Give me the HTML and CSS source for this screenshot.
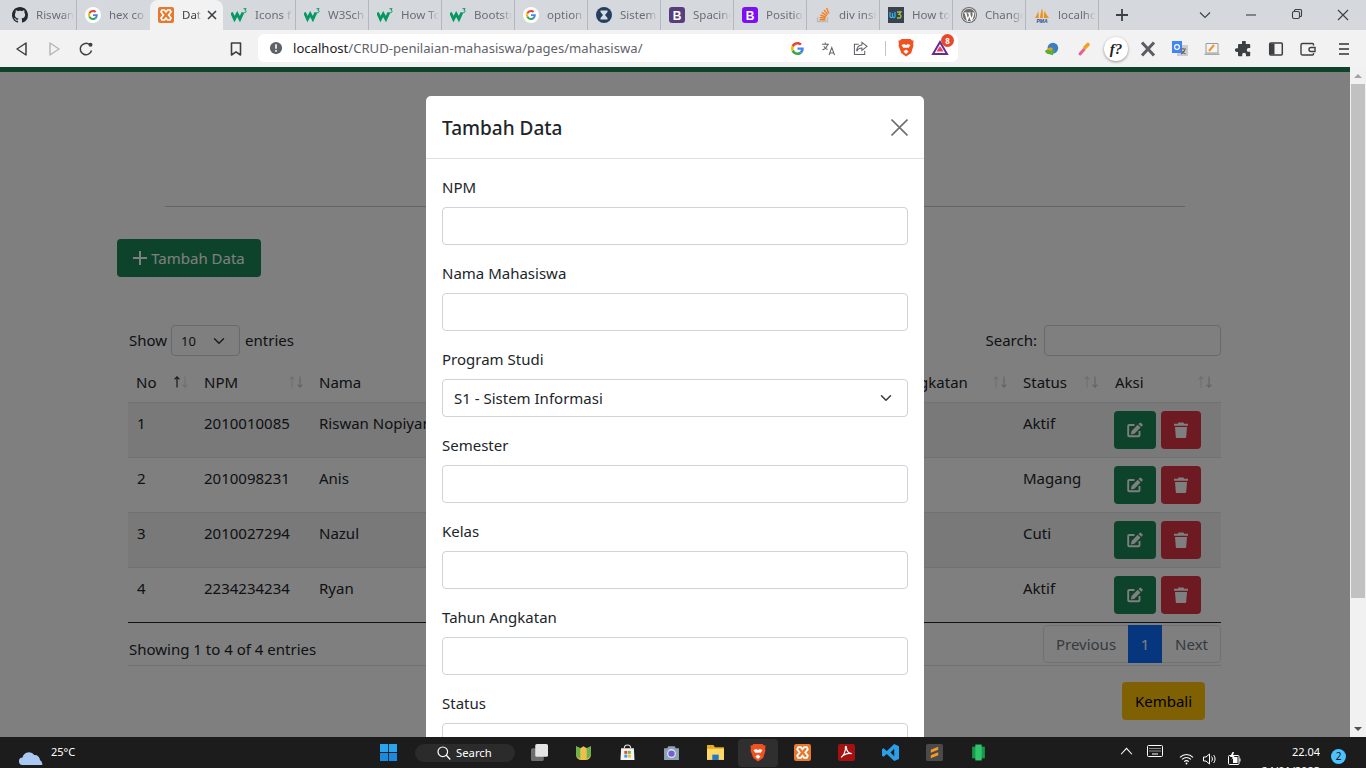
FILE: index.html
```html
<!DOCTYPE html>
<html lang="id">
<head>
  <meta charset="utf-8">
  <title>Data Mahasiswa</title>
  <link rel="stylesheet" href="styles.css">
</head>
<body>

<svg class="defs" width="0" height="0">
  <symbol id="i-google" viewBox="0 0 48 48">
    <path fill="#EA4335" d="M24 9.5c3.54 0 6.71 1.22 9.21 3.6l6.85-6.85C35.9 2.38 30.47 0 24 0 14.62 0 6.51 5.38 2.56 13.22l7.98 6.19C12.43 13.72 17.74 9.5 24 9.5z"/>
    <path fill="#4285F4" d="M46.98 24.55c0-1.57-.15-3.09-.38-4.55H24v9.02h12.94c-.58 2.96-2.26 5.48-4.78 7.18l7.73 6c4.51-4.18 7.09-10.36 7.09-17.65z"/>
    <path fill="#FBBC05" d="M10.53 28.59c-.48-1.45-.76-2.99-.76-4.59s.27-3.14.76-4.59l-7.98-6.19C.92 16.46 0 20.12 0 24c0 3.88.92 7.54 2.56 10.78l7.97-6.19z"/>
    <path fill="#34A853" d="M24 48c6.48 0 11.93-2.13 15.89-5.81l-7.73-6c-2.15 1.45-4.92 2.3-8.16 2.3-6.26 0-11.57-4.22-13.47-9.91l-7.98 6.19C6.51 42.62 14.62 48 24 48z"/>
  </symbol>
  <symbol id="i-gbadge" viewBox="0 0 16 16">
    <circle cx="8" cy="8" r="8" fill="#fff"/>
    <use href="#i-google" x="3" y="3" width="10" height="10"/>
  </symbol>
  <symbol id="i-w3" viewBox="0 0 16 16">
    <path fill="none" stroke="#059862" stroke-width="2.8" d="M0.500 5.500l3 6.500 2.700-5 2.700 5 3-6.500"/>
    <path fill="none" stroke="#059862" stroke-width="1" d="M12.500 1.700h2.600l-1.200 1.500c1.600 0 1.600 2.400-.2 2.400h-1.200"/>
  </symbol>
  <symbol id="i-xampp" viewBox="0 0 16 16">
    <rect width="16" height="16" rx="2" fill="#e8792c"/>
    <path fill="none" stroke="#fff" stroke-width="1.7" d="M4 3h2.400l1.600 2 1.600-2H12l1 2-2.400 3L13 11l-1 2H9.600L8 11l-1.600 2H4l-1-2 2.400-3L3 5z"/>
  </symbol>
  <symbol id="i-edit" viewBox="0 0 16 16">
    <path fill="none" stroke="currentColor" stroke-width="1.900" stroke-linejoin="round" d="M7.500 3H2.200A1 1 0 0 0 1.200 4v9.300a1 1 0 0 0 1 1h9.300a1 1 0 0 0 1-1V9"/>
    <path fill="currentColor" d="M12.600.9a1 1 0 0 1 1.400 0l1.400 1.400a1 1 0 0 1 0 1.400l-1.100 1.100-2.800-2.800zM10.700 2.800l2.800 2.800-6.100 6.100-3.500.7.700-3.500z"/>
  </symbol>
  <symbol id="i-trash" viewBox="0 0 14 16">
    <path fill="currentColor" d="M4.500.6h5l.6 1.200H14v1.900H0V1.800h3.900zM1 5h12l-.8 10a1 1 0 0 1-1 .9H2.800a1 1 0 0 1-1-.9z"/>
  </symbol>
  <symbol id="i-sort" viewBox="0 0 16 12">
    <path fill="none" stroke="#dcdcdc" stroke-width="1.100" d="M4 11.500V1M1.600 3.300L4 .8l2.400 2.500"/>
    <path fill="none" stroke="#c4c4c4" stroke-width="1.100" d="M12 .5V11M9.600 8.700l2.400 2.500 2.400-2.500"/>
  </symbol>
  <symbol id="i-sort-asc" viewBox="0 0 16 12">
    <path fill="none" stroke="#333" stroke-width="1.200" d="M4 11.500V1M1.600 3.300L4 .8l2.400 2.500"/>
    <path fill="none" stroke="#dcdcdc" stroke-width="1.100" d="M12 .5V11M9.600 8.700l2.400 2.500 2.400-2.500"/>
  </symbol>
  <symbol id="i-chev" viewBox="0 0 16 16">
    <path fill="none" stroke="#343a40" stroke-width="2" stroke-linecap="round" stroke-linejoin="round" d="M2 5l6 6 6-6"/>
  </symbol>
</svg>

<div class="tabstrip">
  <div class="tab">
    <svg class="fav" viewBox="0 0 16 16"><path fill="#24292f" d="M8 0C3.580 0 0 3.580 0 8c0 3.540 2.290 6.530 5.470 7.590.4.070.55-.17.55-.38 0-.19-.01-.82-.01-1.490-2.010.37-2.530-.49-2.690-.94-.09-.23-.48-.94-.82-1.130-.28-.15-.68-.52-.01-.53.63-.01 1.080.58 1.230.82.72 1.210 1.870.87 2.330.66.07-.52.28-.87.51-1.070-1.780-.2-3.640-.89-3.640-3.950 0-.87.31-1.590.82-2.150-.08-.2-.36-1.020.08-2.120 0 0 .67-.21 2.200.82.64-.18 1.320-.27 2-.27.68 0 1.360.09 2 .27 1.530-1.040 2.200-.82 2.200-.82.44 1.100.16 1.920.08 2.120.51.56.82 1.270.82 2.150 0 3.070-1.870 3.750-3.650 3.950.29.25.54.73.54 1.480 0 1.070-.01 1.930-.01 2.200 0 .21.15.46.55.38A8.013 8.013 0 0016 8c0-4.420-3.580-8-8-8z"/></svg>
    <span class="tab-label">Riswan</span>
  </div>
  <div class="tab">
    <svg class="fav"><use href="#i-gbadge"/></svg>
    <span class="tab-label">hex co</span>
  </div>
  <div class="tab tab-active">
    <svg class="fav"><use href="#i-xampp"/></svg>
    <span class="tab-label">Dat</span>
    <svg class="tab-close" viewBox="0 0 10 10"><path stroke="#3c4043" stroke-width="1.600" d="M1 1l8 8M9 1l-8 8"/></svg>
  </div>
  <div class="tab">
    <svg class="fav"><use href="#i-w3"/></svg>
    <span class="tab-label">Icons f</span>
  </div>
  <div class="tab">
    <svg class="fav"><use href="#i-w3"/></svg>
    <span class="tab-label">W3Sch</span>
  </div>
  <div class="tab">
    <svg class="fav"><use href="#i-w3"/></svg>
    <span class="tab-label">How To</span>
  </div>
  <div class="tab">
    <svg class="fav"><use href="#i-w3"/></svg>
    <span class="tab-label">Bootstr</span>
  </div>
  <div class="tab">
    <svg class="fav"><use href="#i-gbadge"/></svg>
    <span class="tab-label">option</span>
  </div>
  <div class="tab">
    <svg class="fav" viewBox="0 0 16 16"><circle cx="8" cy="8" r="8" fill="#24405f"/><path fill="#d8dde2" d="M4.500 3.500h7v1.500L9 8l2.500 3v1.500h-7V11L7 8 4.500 5z"/></svg>
    <span class="tab-label">Sistem</span>
  </div>
  <div class="tab">
    <svg class="fav" viewBox="0 0 16 16"><rect width="16" height="16" rx="3" fill="#563d7c"/><text x="8" y="12.500" class="fav-letter">B</text></svg>
    <span class="tab-label">Spacing</span>
  </div>
  <div class="tab">
    <svg class="fav" viewBox="0 0 16 16"><rect width="16" height="16" rx="3" fill="#7c10f2"/><text x="8" y="12.500" class="fav-letter">B</text></svg>
    <span class="tab-label">Position</span>
  </div>
  <div class="tab">
    <svg class="fav" viewBox="0 0 16 16"><path fill="none" stroke="#bcbbbb" stroke-width="1.300" d="M2.500 10v4.500h10V10"/><path fill="none" stroke="#f48024" stroke-width="1.400" d="M4.500 12.800h6M4.700 10.500l5.900.8M5.400 8l5.500 2.200M6.900 5.400l4.900 3.400M9 3l3.700 4.600M11.600 1l2.200 5.400"/></svg>
    <span class="tab-label">div insi</span>
  </div>
  <div class="tab">
    <svg class="fav" viewBox="0 0 16 16"><rect width="16" height="16" fill="#3a4150"/><path fill="none" stroke="#2bb5e8" stroke-width="1.300" d="M2 5v4.500c0 1.500 2.500 1.500 2.500 0V6v3.500c0 1.500 2.500 1.500 2.500 0V5"/><path fill="none" stroke="#a2c93a" stroke-width="1.300" d="M9 5h4l-2 2.300c2.600 0 2.600 3.700 0 3.700H9"/></svg>
    <span class="tab-label">How to</span>
  </div>
  <div class="tab">
    <svg class="fav" viewBox="0 0 16 16"><circle cx="8" cy="8" r="8" fill="#6d6d6d"/><circle cx="8" cy="8" r="6.600" fill="none" stroke="#fff" stroke-width=".7"/><path fill="#fff" d="M2.800 5.500h3.400v.6l-.8.1 1.500 4.800 1-2.800-.7-2H6.500v-.7h3.400v.7h-.8l1.500 4.700 1-3c.3-1-.2-1.600-.7-1.800v-.6h2.300C13.500 7 12.600 10.500 10.700 14.300H10L8.300 9.900 6.600 14.300H6L3.600 6.200h-.8z"/></svg>
    <span class="tab-label">Change</span>
  </div>
  <div class="tab">
    <svg class="fav" viewBox="0 0 16 16"><path fill="#f29111" d="M1 11c1.500-2 2.500-5 3.200-7 .4 2.500.6 5 .4 7zM6 11c.3-3 .8-6 2-9.500 1 3 1 6 .8 9.500zM10 11c0-2.500 0-5 .5-7 1.200 2.500 3 5 4.500 7z"/><text x="8" y="15.800" class="fav-pma">PMA</text></svg>
    <span class="tab-label">localhc</span>
  </div>
  <svg class="tab-new" viewBox="0 0 12 12"><path stroke="#3c4043" stroke-width="1.800" d="M6 0v12M0 6h12"/></svg>
  <div class="window-btns">
    <svg class="win-btn" viewBox="0 0 16 16"><path fill="none" stroke="#3c4043" stroke-width="1.100" d="M3 5.500l5 5 5-5"/></svg>
    <svg class="win-btn" viewBox="0 0 16 16"><path stroke="#3c4043" stroke-width="1.100" d="M3 8h10"/></svg>
    <svg class="win-btn" viewBox="0 0 16 16"><path fill="none" stroke="#3c4043" stroke-width="1.100" d="M5.500 4.500V3.500a1 1 0 0 1 1-1h5a1 1 0 0 1 1 1v5a1 1 0 0 1-1 1h-1"/><rect x="3.500" y="4.500" width="7" height="7" rx="1.500" fill="none" stroke="#3c4043" stroke-width="1.100"/></svg>
    <svg class="win-btn" viewBox="0 0 16 16"><path stroke="#3c4043" stroke-width="1.100" d="M3 3l10 10M13 3L3 13"/></svg>
  </div>
</div>

<div class="toolbar">
  <div class="tool-group">
    <svg class="tool" viewBox="0 0 16 16"><path fill="none" stroke="#3c4043" stroke-width="1.500" stroke-linejoin="round" d="M12 2v12L3 8z"/></svg>
    <svg class="tool" viewBox="0 0 16 16"><path fill="none" stroke="#b5b7ba" stroke-width="1.500" stroke-linejoin="round" d="M4 2v12l9-6z"/></svg>
    <svg class="tool" viewBox="0 0 16 16"><path fill="none" stroke="#3c4043" stroke-width="1.500" d="M13.500 9.500A5.700 5.700 0 1 1 11.800 3.800"/><circle cx="12.500" cy="3.800" r="2" fill="#3c4043"/></svg>
  </div>
  <svg class="tool tool-bookmark" viewBox="0 0 16 16"><path fill="none" stroke="#3c4043" stroke-width="1.600" stroke-linejoin="round" d="M3.500 2h9v12L8 10.800 3.500 14z"/></svg>
  <div class="omnibox">
    <svg class="omni-info" viewBox="0 0 16 16"><circle cx="8" cy="8" r="7" fill="#5f6368"/><path stroke="#fff" stroke-width="1.800" d="M8 3.600v5.200M8 10.200v2"/></svg>
    <span class="omni-url">localhost<span class="omni-path">/CRUD-penilaian-mahasiswa/pages/mahasiswa/</span></span>
    <div class="omni-icons">
      <svg class="omni-g"><use href="#i-google"/></svg>
      <svg class="omni-tool" viewBox="0 0 16 16"><path fill="none" stroke="#5f6368" stroke-width="1.100" d="M1 3.500h7.500M4.500 1.500v2M7 3.500c-.5 2.500-2.500 4.800-5.500 6M3 5.500c.8 1.800 2.300 3 4 3.500M8.500 15l3-8 3 8M9.500 12.800h4"/></svg>
      <svg class="omni-tool" viewBox="0 0 16 16"><path fill="none" stroke="#5f6368" stroke-width="1.100" d="M6 3.500H1.500v11h11v-4M9.500 1.500l5.500 4.200-5.500 4.300V7.500c-3 0-4.500 1.200-5.500 3.500 0-3.800 2-6.500 5.500-6.800z"/></svg>
      <span class="omni-sep"></span>
      <svg class="omni-brave" viewBox="0 0 16 18"><path fill="#f1501f" d="M3.500 0h9l1.500 1.600 1.600-.2-.5 3.600.4 1.500-2.300 7.500L8 17.500 3.300 14 .5 6.500.9 5 .4 1.400 2 1.600z"/><path fill="#fff" d="M8 10.500l2.600 2L8 15l-2.600-2.500zM3.500 6l2.700-1L8 6l1.800-1 2.700 1-2 3-1.500-.5-1 .5-1-.5-1.500.5z"/></svg>
      <span class="omni-bat">
        <svg viewBox="0 0 18 16"><path fill="none" stroke="#662d91" stroke-width="2" d="M9 2L2 14h14z"/><path fill="#e3405f" d="M5.500 11.500h7L9 6z"/></svg>
        <span class="bat-badge">8</span>
      </span>
    </div>
  </div>
  <div class="ext-group">
    <svg class="ext" viewBox="0 0 18 18"><circle cx="10" cy="8" r="6" fill="#3a7fc4"/><path fill="#5caf35" d="M1 11c3-2 6-2 8 0l3-1-2 6-4-1c-2 0-4-1-5-4z"/><path fill="#e3a01b" d="M3 10c2-3 5-3 7-2l-1 3c-2-1-4-1-6-1z"/></svg>
    <svg class="ext" viewBox="0 0 16 16"><path stroke="#ee5d8f" stroke-width="3" stroke-linecap="round" d="M4 13l4-4.500"/><path stroke="#f2a11d" stroke-width="3.600" stroke-linecap="round" d="M9 6.500l3-3"/></svg>
    <span class="ext-f">f?</span>
    <svg class="ext" viewBox="0 0 16 16"><path stroke="#5a5d61" stroke-width="3" d="M2 1.500l12 13M14 1.500L2 14.500"/></svg>
    <svg class="ext" viewBox="0 0 16 16"><rect x="5" y="4" width="11" height="11" fill="#c9ccd0"/><rect width="10" height="12" fill="#4285f4"/><circle cx="5" cy="6" r="2.400" fill="none" stroke="#fff" stroke-width="1.200"/><path stroke="#6a6d70" stroke-width="1.100" d="M8 8h6M11 7v1.500M13 8.500c-.5 2-2 3.500-4 4.500M9.500 10c.8 1 2.500 2.500 4 3"/></svg>
    <svg class="ext" viewBox="0 0 18 16"><path fill="#f4f4f4" stroke="#9a9a9a" d="M3 2.500h12v9.500H3z"/><path fill="#a9a9a9" d="M1 12.500h16l-1 1.500H2z"/><path stroke="#f0942d" stroke-width="2" d="M6 10l5-6"/></svg>
    <svg class="ext" viewBox="0 0 16 16"><path fill="#3c4043" d="M6 1.200a1.900 1.900 0 0 1 3.800 0V3h3.400a1 1 0 0 1 1 1v3h-1.500a1.900 1.900 0 0 0 0 3.800h1.500v3.400a1 1 0 0 1-1 1H10v-1.500a1.900 1.900 0 0 0-3.800 0v1.500H3a1 1 0 0 1-1-1V11H.8a1.900 1.900 0 0 1 0-3.800H2V4a1 1 0 0 1 1-1h3z"/></svg>
    <svg class="ext" viewBox="0 0 16 16"><rect x="1.700" y="2" width="12.600" height="12" rx="1" fill="none" stroke="#3c4043" stroke-width="1.500"/><rect x="2" y="2.500" width="4.500" height="11" fill="#3c4043"/></svg>
    <svg class="ext" viewBox="0 0 16 16"><path fill="none" stroke="#3c4043" stroke-width="1.400" d="M13.500 4.500v-1a1 1 0 0 0-1-1H2.500a1.500 1.500 0 0 0-1.500 1.500v8.500a1.500 1.500 0 0 0 1.500 1.500h10a1 1 0 0 0 1-1v-1M15 6.500h-4a2 2 0 0 0 0 4h4z"/></svg>
    <svg class="ext ext-menu" viewBox="0 0 16 16"><path stroke="#5f6368" stroke-width="1.800" d="M3 3h10M3 8h10M3 13h10"/></svg>
  </div>
</div>

<div class="viewport">
  <div class="page">
    <div class="topline"></div>
    <div class="container">
      <hr class="title-rule">
      <button class="btn btn-success btn-add"><svg class="plus" viewBox="0 0 14 14"><path stroke="#fff" stroke-width="2" d="M7 0v14M0 7h14"/></svg>Tambah Data</button>

      <div class="dt-wrap">
        <div class="dt-top">
          <div class="dt-length">Show
            <span class="dt-select">10 <svg class="chev"><use href="#i-chev"/></svg></span>
            entries</div>
          <div class="dt-search">Search: <span class="dt-input"></span></div>
        </div>

        <table class="dt">
          <colgroup>
            <col class="c-no"><col class="c-npm"><col class="c-nama"><col class="c-prodi"><col class="c-sem"><col class="c-kelas"><col class="c-tahun"><col class="c-status"><col class="c-aksi">
          </colgroup>
          <thead>
            <tr>
              <th>No <svg class="sort"><use href="#i-sort-asc"/></svg></th>
              <th>NPM <svg class="sort"><use href="#i-sort"/></svg></th>
              <th>Nama <svg class="sort"><use href="#i-sort"/></svg></th>
              <th></th>
              <th></th>
              <th></th>
              <th>Tahun Angkatan <svg class="sort"><use href="#i-sort"/></svg></th>
              <th>Status <svg class="sort"><use href="#i-sort"/></svg></th>
              <th>Aksi <svg class="sort"><use href="#i-sort"/></svg></th>
            </tr>
          </thead>
          <tbody>
            <tr class="odd">
              <td>1</td><td>2010010085</td><td>Riswan Nopiyar</td><td></td><td></td><td></td><td></td><td>Aktif</td>
              <td><span class="act act-edit"><svg><use href="#i-edit"/></svg></span><span class="act act-del"><svg><use href="#i-trash"/></svg></span></td>
            </tr>
            <tr>
              <td>2</td><td>2010098231</td><td>Anis</td><td></td><td></td><td></td><td></td><td>Magang</td>
              <td><span class="act act-edit"><svg><use href="#i-edit"/></svg></span><span class="act act-del"><svg><use href="#i-trash"/></svg></span></td>
            </tr>
            <tr class="odd">
              <td>3</td><td>2010027294</td><td>Nazul</td><td></td><td></td><td></td><td></td><td>Cuti</td>
              <td><span class="act act-edit"><svg><use href="#i-edit"/></svg></span><span class="act act-del"><svg><use href="#i-trash"/></svg></span></td>
            </tr>
            <tr>
              <td>4</td><td>2234234234</td><td>Ryan</td><td></td><td></td><td></td><td></td><td>Aktif</td>
              <td><span class="act act-edit"><svg><use href="#i-edit"/></svg></span><span class="act act-del"><svg><use href="#i-trash"/></svg></span></td>
            </tr>
          </tbody>
        </table>

        <div class="dt-bottom">
          <div class="dt-info">Showing 1 to 4 of 4 entries</div>
          <div class="pager">
            <span class="pg">Previous</span><span class="pg pg-on">1</span><span class="pg">Next</span>
          </div>
        </div>
      </div>

      <div class="back-row"><button class="btn btn-warning">Kembali</button></div>
    </div>
  </div>

  <div class="scrollbar">
    <div class="sb-arrow"><span class="sb-up"></span></div>
    <div class="sb-track"><div class="sb-thumb"></div></div>
    <div class="sb-arrow"><span class="sb-down"></span></div>
  </div>

  <div class="backdrop"></div>

  <div class="modal">
    <div class="modal-head">
      <h5 class="modal-title">Tambah Data</h5>
      <svg class="modal-x" viewBox="0 0 16 16"><path stroke="#6f6f6f" stroke-width="1.500" d="M.5.500l15 15M15.500.5l-15 15"/></svg>
    </div>
    <div class="modal-body">
      <div class="field"><label>NPM</label><div class="control"></div></div>
      <div class="field"><label>Nama Mahasiswa</label><div class="control"></div></div>
      <div class="field"><label>Program Studi</label><div class="control control-select">S1 - Sistem Informasi <svg class="chev"><use href="#i-chev"/></svg></div></div>
      <div class="field"><label>Semester</label><div class="control"></div></div>
      <div class="field"><label>Kelas</label><div class="control"></div></div>
      <div class="field"><label>Tahun Angkatan</label><div class="control"></div></div>
      <div class="field"><label>Status</label><div class="control"></div></div>
    </div>
  </div>
</div>

<div class="taskbar">
  <div class="weather">
    <svg class="weather-icon" viewBox="0 0 26 18"><path fill="#a9c9f2" d="M4 18a4 4 0 0 1-.5-8A7 7 0 0 1 16 7.500a5.500 5.500 0 0 1 6 5.500c1.500.5 2.500 2.500 2.500 5z"/></svg>
    <span>25°C</span>
  </div>
  <div class="task-center">
    <svg class="task-ico task-start" viewBox="0 0 16 16"><path fill="#2aa4ee" d="M0 0h7.600v7.600H0zM8.400 0H16v7.600H8.400z"/><path fill="#1a8ae0" d="M0 8.400h7.600V16H0zM8.400 8.400H16V16H8.400z"/></svg>
    <div class="task-search">
      <svg viewBox="0 0 14 14"><circle cx="5.800" cy="5.800" r="4.800" fill="none" stroke="#fff" stroke-width="1.200"/><path stroke="#fff" stroke-width="1.300" d="M9.300 9.300l4 4.200"/></svg>
      Search
    </div>
    <svg class="task-ico" viewBox="0 0 16 16"><rect y="4" width="12" height="12" rx="1.500" fill="#6e6e6e"/><rect x="4" width="12" height="12" rx="1.500" fill="#e4e4e4"/></svg>
    <svg class="task-ico" viewBox="0 0 16 16"><path fill="#ecc04c" d="M1 2l4 2 3-2 3 2 4-2v8a5 5 0 0 1-5 5H6a5 5 0 0 1-5-5z"/><path fill="#6cb24a" d="M1 2l4 2v10c-3-1-4-3-4-5zM15 2l-4 2v10c3-1 4-3 4-5z"/></svg>
    <svg class="task-ico" viewBox="0 0 16 16"><path fill="#f3f3f3" d="M2 4h12l.6 11H1.400z"/><path fill="none" stroke="#e5e5e5" d="M5 4c0-4 6-4 6 0"/><path fill="#e2512c" d="M5 6.500h2.800v2.800H5z"/><path fill="#7fba42" d="M8.400 6.500h2.800v2.800H8.400z"/><path fill="#30a5e8" d="M5 10h2.800v2.800H5z"/><path fill="#fbbb2c" d="M8.400 10h2.800v2.800H8.400z"/></svg>
    <svg class="task-ico" viewBox="0 0 16 16"><path fill="#8fa4b3" d="M1 4h3l1-2h6l1 2h3v11H1z"/><circle cx="8" cy="9" r="3.600" fill="#7a5dd6" stroke="#dbe7ef" stroke-width="1.200"/></svg>
    <svg class="task-ico" viewBox="0 0 16 16"><path fill="#e9ab17" d="M0 1h6l1.500 2H16v3H0z"/><path fill="#ffd968" d="M0 4.500h16V15H0z"/><path fill="#2278c9" d="M5 10h6v5H5z"/></svg>
    <span class="task-on"><svg viewBox="0 0 16 18"><path fill="#f1501f" d="M3.500 0h9l1.500 1.600 1.600-.2-.5 3.600.4 1.500-2.300 7.500L8 17.500 3.300 14 .5 6.500.9 5 .4 1.400 2 1.600z"/><path fill="#fff" d="M8 10.500l2.600 2L8 15l-2.600-2.500zM3.500 6l2.700-1L8 6l1.800-1 2.700 1-2 3-1.500-.5-1 .5-1-.5-1.500.5z"/></svg></span>
    <svg class="task-ico" viewBox="0 0 16 16"><use href="#i-xampp"/></svg>
    <svg class="task-ico" viewBox="0 0 16 16"><rect width="16" height="16" rx="2" fill="#a51111"/><path fill="none" stroke="#fff" stroke-width="1.100" d="M3 12.500c2-1 4.500-6 4-9.500-.3-1 1-1 .9 0 0 3 2 5.500 5 6-3-.5-7 .5-9.900 3.500z"/></svg>
    <svg class="task-ico" viewBox="0 0 16 16"><path fill="#2a9ee8" d="M11.500 0L16 2v12l-4.500 2L4.500 9.500 1.500 12 0 11V5l1.500-1 3 2.500zm0 4.500L8 8l3.500 3.500z"/></svg>
    <svg class="task-ico" viewBox="0 0 16 16"><rect width="16" height="16" rx="1.500" fill="#4a4a4a"/><path fill="#f59a23" d="M11.500 2.500v3L4.500 8.300V5.300zM4.500 13.500v-3l7-2.800v3z"/></svg>
    <svg class="task-ico" viewBox="0 0 16 16"><path fill="#159a4a" d="M2 2.500h12v11H2z"/><path fill="#31c46a" d="M5 .5h6v15H5z"/></svg>
  </div>
  <div class="tray">
    <svg class="tray-ico tray-chev" viewBox="0 0 12 8"><path fill="none" stroke="#fff" d="M1 7l5-5.500L11 7"/></svg>
    <svg class="tray-ico tray-kb" viewBox="0 0 16 12"><rect x=".5" y=".5" width="15" height="11" rx="1" fill="none" stroke="#fff"/><path stroke="#fff" stroke-dasharray="1 1" d="M2.500 3.500h11M2.500 6h11"/><path stroke="#fff" d="M5 9h6"/></svg>
    <svg class="tray-ico tray-low tray-wifi" viewBox="0 0 16 12"><path fill="none" stroke="#fff" stroke-width="1.100" d="M1 4.200c4-4 10-4 14 0M3.200 6.500c3-2.700 6.600-2.700 9.600 0M5.500 8.800c1.500-1.300 3.500-1.300 5 0"/><circle cx="8" cy="10.800" r="1" fill="#fff"/></svg>
    <svg class="tray-ico tray-low tray-vol" viewBox="0 0 14 14"><path fill="none" stroke="#fff" d="M1 5h2.500L7 2v10L3.500 9H1zM9 4.500c1.200 1.500 1.200 3.500 0 5M11 3c2 2 2 6 0 8"/></svg>
    <svg class="tray-ico tray-low" viewBox="0 0 14 14"><rect x="1" y="3.500" width="10.500" height="9" rx="1" fill="none" stroke="#fff"/><rect x="5.500" y="5" width="4.500" height="6" fill="#fff"/><path stroke="#fff" d="M12.500 6.500v3"/><path fill="#fff" d="M5 0L2.500 5H5L4 8l3.500-4.500H5.500L6.500 0z"/></svg>
    <div class="clock"><div>22.04</div><div>24/01/2023</div></div>
    <span class="notif">2</span>
  </div>
</div>

</body>
</html>
```

FILE: styles.css
```css
* {
  box-sizing: border-box;
}

html, body {
  height: 100%;
}

body {
  margin: 0;
  display: flex;
  flex-direction: column;
  overflow: hidden;
  font-family: "Noto Sans", "Open Sans", sans-serif;
  font-size: 15px;
  line-height: 24px;
  color: #212529;
  background: #fff;
}

.defs {
  position: absolute;
}

/* browser tabs */
.tabstrip {
  display: flex;
  align-items: center;
  flex: 0 0 30px;
  height: 30px;
  padding-left: 4px;
  background: #d5d8dc;
}

.tab {
  display: flex;
  align-items: center;
  flex: 0 0 73px;
  width: 73px;
  height: 30px;
  padding-left: 8px;
  border-right: 1px solid #b3b6ba;
  position: relative;
}

.tab:nth-child(2) {
  border-right-color: #d5d8dc;
}

.tab-active {
  background: #f2f2f2;
  border-right: 0;
  border-radius: 8px 8px 0 0;
}

.fav {
  flex: none;
  width: 16px;
  height: 16px;
}

.fav-letter {
  font: bold 12px "Liberation Sans", sans-serif;
  fill: #fff;
  text-anchor: middle;
}

.fav-pma {
  font: bold italic 5px "Liberation Sans", sans-serif;
  fill: #2a4a95;
  text-anchor: middle;
}

.tab-label {
  display: block;
  width: 38px;
  margin-left: 8px;
  overflow: hidden;
  white-space: nowrap;
  font-size: 11.500px;
  color: #6a6d71;
  -webkit-mask-image: linear-gradient(to right, #000 70%, transparent);
  mask-image: linear-gradient(to right, #000 70%, transparent);
}

.tab-active .tab-label {
  width: 20px;
  margin-left: 8px;
  color: #3c4043;
}

.tab-close {
  width: 10px;
  height: 10px;
  margin-left: 5px;
}

.tab-new {
  width: 12px;
  height: 12px;
  margin-left: 17px;
}

.window-btns {
  display: flex;
  margin-left: auto;
}

.win-btn {
  width: 46px;
  height: 16px;
}

/* toolbar */
.toolbar {
  display: flex;
  align-items: center;
  flex: 0 0 37px;
  height: 37px;
  background: #f2f2f2;
}

.tool-group {
  display: flex;
  margin-left: 6px;
}

.tool {
  width: 32px;
  height: 16px;
}

.tool-bookmark {
  margin-left: 118px;
}

.omnibox {
  display: flex;
  align-items: center;
  width: 700px;
  height: 28px;
  margin: 0 0 1px 6px;
  padding-left: 11px;
  background: #fff;
  border-radius: 6px;
}

.omni-info {
  width: 14px;
  height: 14px;
}

.omni-url {
  margin-left: 10px;
  font-size: 13.100px;
  color: #202124;
  white-space: nowrap;
}

.omni-path {
  color: #5f6368;
}

.omni-icons {
  display: flex;
  align-items: center;
  margin-left: auto;
  padding-right: 9px;
}

.omni-g {
  width: 13px;
  height: 13px;
}

.omni-tool {
  width: 15px;
  height: 15px;
  margin-left: 17px;
}

.omni-sep {
  width: 1px;
  height: 15px;
  margin-left: 17px;
  background: #c4c4c4;
}

.omni-brave {
  width: 16px;
  height: 18px;
  margin-left: 12px;
}

.omni-bat {
  position: relative;
  width: 18px;
  height: 16px;
  margin-left: 17px;
}

.omni-bat svg {
  display: block;
  width: 18px;
  height: 16px;
}

.bat-badge {
  position: absolute;
  top: -6px;
  left: 10px;
  width: 13px;
  height: 13px;
  border-radius: 50%;
  background: #e8492b;
  color: #fff;
  font-size: 8px;
  font-weight: 700;
  line-height: 13px;
  text-align: center;
}

.ext-group {
  display: flex;
  align-items: center;
  margin-left: 85px;
}

.ext {
  flex: none;
  width: 18px;
  height: 16px;
  margin-right: 14px;
}

.ext-menu {
  margin: 0 0 0 4px;
}

.ext-f {
  flex: none;
  width: 24px;
  height: 24px;
  margin: 0 11px 0 -3px;
  border-radius: 50%;
  background: #fff;
  box-shadow: 0 1px 3px rgba(0, 0, 0, .4);
  font: italic bold 15px/24px "Liberation Serif", serif;
  text-align: center;
  color: #222;
}

/* page area */
.viewport {
  position: relative;
  display: flex;
  flex: 1;
  min-height: 0;
  overflow: hidden;
}

.page {
  flex: 1;
  min-width: 0;
  overflow: hidden;
}

.topline {
  height: 5px;
  background: #198754;
}

.container {
  width: 1116px;
  margin: 0 auto;
}

.title-rule {
  width: 1020px;
  height: 1px;
  margin: 134px auto 32px;
  border: 0;
  background: #c8c9ca;
}

.btn {
  display: inline-block;
  height: 38px;
  padding: 0 16px;
  border: 0;
  border-radius: 4px;
  font: inherit;
}

.btn-success {
  background: #198754;
  color: #fff;
}

.btn-add {
  display: flex;
  align-items: center;
  justify-content: center;
  width: 144px;
  padding: 0;
}

.plus {
  width: 14px;
  height: 14px;
  margin-right: 4px;
}

.btn-warning {
  width: 83px;
  padding: 0;
  background: #ffc107;
  color: #000;
}

/* datatable */
.dt-wrap {
  width: 1093px;
  margin: 48px 0 0 11px;
}

.dt-top {
  display: flex;
  justify-content: space-between;
  height: 31px;
  margin-bottom: 7px;
  line-height: 30px;
}

.dt-length, .dt-search {
  display: flex;
  gap: 4px;
}

.dt-length {
  padding-left: 1px;
}

.dt-search {
  gap: 7px;
}

.dt-select {
  display: flex;
  align-items: center;
  justify-content: space-between;
  width: 69px;
  height: 31px;
  margin-right: 1px;
  padding: 0 13px 0 9px;
  border: 1px solid #ced4da;
  border-radius: 4px;
  font-size: 13px;
}

.dt-input {
  width: 177px;
  height: 31px;
  border: 1px solid #ced4da;
  border-radius: 4px;
}

.chev {
  width: 14px;
  height: 12px;
}

.dt {
  width: 100%;
  table-layout: fixed;
  border-collapse: collapse;
}

.c-no { width: 67px; }
.c-npm { width: 115px; }
.c-nama { width: 180px; }
.c-prodi { width: 170px; }
.c-sem { width: 90px; }
.c-kelas { width: 94px; }
.c-tahun { width: 170px; }
.c-status { width: 91px; }
.c-aksi { width: 116px; }

.dt th {
  position: relative;
  height: 39px;
  padding: 0 26px 0 9px;
  font-weight: 400;
  text-align: left;
  white-space: nowrap;
  overflow: hidden;
  border-bottom: 1px solid #dee2e6;
}

.dt th:first-child {
  padding-left: 8px;
}

.dt th:last-child {
  padding-left: 10px;
}

.sort {
  position: absolute;
  right: 6px;
  top: 13px;
  width: 16px;
  height: 12px;
}

.dt th:last-child .sort {
  right: 8px;
}

.dt td {
  height: 55px;
  padding: 8px 9px;
  vertical-align: top;
  white-space: nowrap;
  overflow: hidden;
  border-bottom: 1px solid #dee2e6;
}

.odd td {
  background: #f2f2f2;
}

.dt tbody tr:last-child td {
  border-bottom: 1px solid #212529;
}

.act {
  display: inline-flex;
  align-items: center;
  justify-content: center;
  width: 40px;
  height: 38px;
  border-radius: 4px;
  color: #fff;
  vertical-align: top;
}

.act-edit {
  width: 42px;
  margin-right: 5px;
  background: #198754;
}

.act-edit svg {
  width: 16px;
  height: 16px;
}

.act-del {
  background: #dc3545;
}

.act-del svg {
  width: 14px;
  height: 16px;
}

.dt-bottom {
  display: flex;
  justify-content: space-between;
  height: 43px;
  padding-top: 2px;
  border-bottom: 1px solid #dee2e6;
}

.dt-info {
  padding: 12px 0 0 1px;
}

.pager {
  display: flex;
  height: 38px;
  border: 1px solid #dee2e6;
  border-radius: 4px;
  color: #6c757d;
}

.pg {
  padding: 6px 12px;
}

.pg:last-child {
  padding-left: 13px;
}

.pg-on {
  width: 34px;
  margin: -1px 0;
  padding: 7px 0;
  text-align: center;
  background: #0d6efd;
  color: #fff;
}

.back-row {
  display: flex;
  justify-content: flex-end;
  margin: 16px 28px 0 0;
}

/* scrollbar */
.scrollbar {
  display: flex;
  flex-direction: column;
  flex: 0 0 16px;
  background: #f1f1f1;
}

.sb-arrow {
  display: flex;
  align-items: center;
  justify-content: center;
  height: 17px;
}

.sb-up {
  border: 4px solid transparent;
  border-top: 0;
  border-bottom: 4px solid #a3a3a3;
}

.sb-down {
  border: 4px solid transparent;
  border-bottom: 0;
  border-top: 4px solid #505050;
}

.sb-track {
  flex: 1;
  padding: 0 1px;
}

.sb-thumb {
  height: 514px;
  background: #c1c1c1;
}

/* modal, lies over the page */
.backdrop {
  position: absolute;
  top: 0;
  left: 0;
  bottom: 0;
  width: 1350px;
  background: rgba(0, 0, 0, .5);
}

.modal {
  position: absolute;
  top: 29px;
  left: 426px;
  width: 498px;
  background: #fff;
  border-radius: 5px;
}

.modal-head {
  display: flex;
  align-items: center;
  justify-content: space-between;
  height: 63px;
  padding: 1px 16px 0 16px;
  border-bottom: 1px solid #dee2e6;
}

.modal-title {
  margin: 0;
  font-size: 19px;
  font-weight: 500;
}

.modal-x {
  width: 17px;
  height: 17px;
}

.modal-body {
  padding: 16px;
}

.field {
  margin-bottom: 16px;
}

.field label {
  display: block;
  margin-bottom: 8px;
}

.control {
  height: 38px;
  padding: 6px 11px;
  border: 1px solid #ced4da;
  border-radius: 4px;
}

.control-select {
  display: flex;
  align-items: center;
  justify-content: space-between;
  padding-right: 14px;
}

/* windows taskbar */
.taskbar {
  position: relative;
  display: flex;
  align-items: center;
  flex: 0 0 31px;
  height: 31px;
  background: #1c1c1c;
  color: #fff;
  font-size: 11px;
}

.weather {
  display: flex;
  align-items: center;
  gap: 7px;
  width: 378px;
  padding: 0 0 2px 19px;
}

.weather-icon {
  width: 25px;
  height: 17px;
  margin-top: 9px;
}

.task-center {
  display: flex;
  align-items: center;
  height: 31px;
}

.task-ico {
  flex: none;
  width: 17px;
  height: 17px;
  margin: 0 13px 0 14px;
}

.task-start {
  margin: 0 18px 0 2px;
}

.task-search {
  display: flex;
  align-items: center;
  gap: 5px;
  width: 100px;
  height: 18px;
  margin-right: 2px;
  padding-left: 22px;
  border-radius: 9px;
  background: #2b2b2b;
  font-size: 11.300px;
}

.task-search svg {
  width: 14px;
  height: 14px;
}

.task-on {
  display: flex;
  justify-content: center;
  flex: none;
  width: 40px;
  height: 28px;
  margin: 0 2px 0 1px;
  padding-top: 5px;
  border-radius: 4px;
  background: #2f2f2f;
}

.task-on svg {
  width: 16px;
  height: 18px;
}

.tray {
  display: flex;
  align-items: center;
  position: absolute;
  left: 1120px;
  top: 0;
  height: 31px;
}

.tray-ico {
  flex: none;
  width: 13px;
  height: 12px;
  margin-top: -3px;
  margin-right: 6px;
}

.tray-chev {
  margin-right: 14px;
}

.tray-kb {
  width: 16px;
  margin-right: 16px;
}

.tray-low {
  width: 15px;
  height: 14px;
  margin-top: 13px;
}

.tray-wifi {
  margin-right: 8px;
}

.tray-vol {
  margin-right: 10px;
}

.clock {
  width: 70px;
  margin-left: 2px;
  height: 31px;
  padding-top: 5px;
  overflow: hidden;
  text-align: right;
  line-height: 19px;
  white-space: nowrap;
}

.notif {
  width: 15px;
  height: 15px;
  margin: 8px 0 0 11px;
  border-radius: 50%;
  background: #4cc2ff;
  color: #111;
  font-size: 10px;
  line-height: 15px;
  text-align: center;
}
```
